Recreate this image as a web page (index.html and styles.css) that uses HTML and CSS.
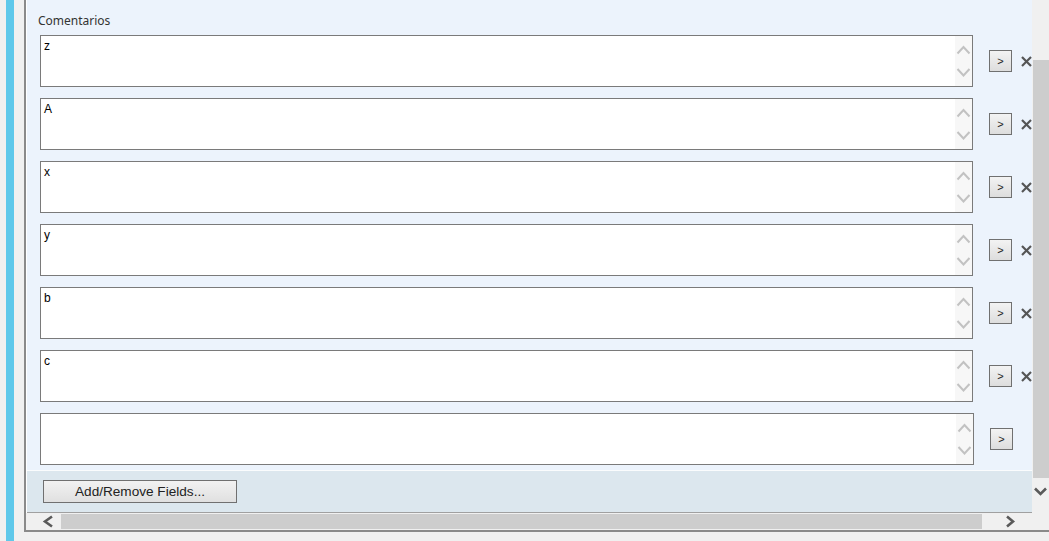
FILE: index.html
```html
<!DOCTYPE html>
<html lang="es">
<head>
  <meta charset="UTF-8" />
  <meta name="viewport" content="width=device-width, initial-scale=1.0"/>
  <title>Comentarios</title>
  <link rel="stylesheet" href="styles.css">
</head>
<body>
  <div class="gutter"></div>
  <div class="accent"></div>
  <div class="spacer"></div>

  <div class="frame">
    <div class="panel">
      <div class="fields">
        <div class="label">Comentarios</div>
        <div class="rows" id="rows"></div>
      </div>
      <div class="footer">
        <button class="fields-btn">Add/Remove Fields...</button>
      </div>
    </div>

    <div class="vscroll">
      <div class="vthumb"></div>
      <svg class="varrow" width="17" height="17" viewBox="0 0 17 17">
        <polyline points="3,5.5 8.5,11 14,5.5" fill="none" stroke="#5a5a5a" stroke-width="2.6"/>
      </svg>
    </div>

    <div class="hscroll">
      <svg class="harrow-left" width="35" height="17" viewBox="0 0 35 17">
        <polyline points="26,3.5 19,8.5 26,13.5" fill="none" stroke="#5a5a5a" stroke-width="2.6"/>
      </svg>
      <div class="hthumb"></div>
      <svg class="harrow-right" width="50" height="17" viewBox="0 0 50 17">
        <polyline points="25,3.5 31,8.5 25,13.5" fill="none" stroke="#5a5a5a" stroke-width="2.6"/>
      </svg>
    </div>
    <div class="corner"></div>
  </div>

  <script>
    const values = ["z", "A", "x", "y", "b", "c", ""];

    const chevrons = '<svg width="17" height="50" viewBox="0 0 17 50">' +
      '<polyline points="2.5,17.5 8.5,11 14.5,17.5" fill="none" stroke="#c2c2c2" stroke-width="2"/>' +
      '<polyline points="2.5,33 8.5,39.5 14.5,33" fill="none" stroke="#c2c2c2" stroke-width="2"/>' +
      '</svg>';

    const cross = '<svg width="11" height="11" viewBox="0 0 11 11">' +
      '<line x1="1" y1="1" x2="10" y2="10" stroke="#555" stroke-width="2.2"/>' +
      '<line x1="10" y1="1" x2="1" y2="10" stroke="#555" stroke-width="2.2"/>' +
      '</svg>';

    const rows = document.getElementById('rows');
    values.forEach(function (v, i) {
      const last = i === values.length - 1;
      const row = document.createElement('div');
      row.className = 'row';
      row.innerHTML =
        '<div class="memo"><div class="memo-text">' + v + '</div>' +
        '<div class="memo-scroll">' + chevrons + '</div></div>' +
        '<button class="go">&gt;</button>' +
        (last ? '' : '<span class="remove">' + cross + '</span>');
      rows.appendChild(row);
    });
  </script>
</body>
</html>
```

FILE: styles.css
```css
body {
  margin: 0;
  background: #f0f0f0;
  display: flex;
  height: 541px;
  overflow: hidden;
  font-family: 'Liberation Sans', Arial, sans-serif;
}

.gutter {
  width: 6px;
}

.accent {
  width: 8px;
  background: #5fc8ea;
}

.spacer {
  width: 10px;
}

.frame {
  flex: 1;
  height: 530px;
  border-left: 2px solid #8a8a8a;
  border-bottom: 2px solid #8a8a8a;
  display: grid;
  grid-template-columns: 1fr 17px;
  grid-template-rows: 513px 17px;
}

.panel {
  border-left: 1px solid #ffffff;
  background: #ecf3fc;
  display: flex;
  flex-direction: column;
  overflow: hidden;
}

.fields {
  height: 470px;
  padding: 13px 0 0 11px;
  box-sizing: border-box;
}

.label {
  font-family: 'Noto Sans', sans-serif;
  font-size: 12px;
  line-height: 16px;
  color: #333;
}

.rows {
  margin: 6px 0 0 2px;
  display: flex;
  flex-direction: column;
  gap: 11px;
}

.row {
  display: flex;
  align-items: flex-start;
}

.memo {
  width: 934px;
  height: 52px;
  box-sizing: border-box;
  border: 1px solid #7a7a7a;
  background: #fff;
  display: flex;
}

.memo-text {
  flex: 1;
  padding: 3px 3px;
  font-size: 12px;
  line-height: 14px;
  color: #000;
}

.memo-scroll {
  width: 17px;
  background: #f7f7f7;
}

.memo-scroll svg {
  display: block;
}

.go {
  margin: 15px 0 0 16px;
  width: 23px;
  height: 22px;
  padding: 0;
  border: 1px solid #707070;
  background: linear-gradient(#f3f3f3, #dddddd);
  font-family: 'Liberation Sans', Arial, sans-serif;
  font-size: 11px;
  color: #222;
}

.remove {
  margin: 21px 0 0 9px;
  display: flex;
}

.footer {
  flex: 1;
  border-top: 1px solid #fafcfd;
  border-bottom: 1px solid #a0a0a0;
  background: #dce7ee;
  padding: 9px 0 0 16px;
}

.fields-btn {
  width: 194px;
  height: 23px;
  padding: 0;
  border: 1px solid #707070;
  background: linear-gradient(#f2f2f2, #e0e0e0);
  font-family: 'Liberation Sans', Arial, sans-serif;
  font-size: 13.6px;
  color: #222;
}

.vscroll {
  background: #f0f0f0;
  display: flex;
  flex-direction: column;
  align-items: flex-end;
  padding-top: 60px;
}

.vthumb {
  width: 16px;
  height: 418px;
  background: #cdcdcd;
}

.varrow {
  margin-top: 5px;
  align-self: stretch;
}

.hscroll {
  background: #f0f0f0;
  display: flex;
  align-items: center;
}

.hthumb {
  flex: 1;
  height: 15px;
  background: #cdcdcd;
}

.corner {
  background: #f0f0f0;
}
```
